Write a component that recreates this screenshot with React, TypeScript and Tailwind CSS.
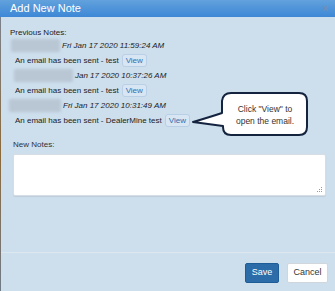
import React from "react";

interface Note {
  nameWidth: number;
  nameOffset: number;
  date: string;
  text: string;
}

const notes: Note[] = [
  { nameWidth: 49, nameOffset: 1, date: "Fri Jan 17 2020 11:59:24 AM", text: "An email has been sent - test" },
  { nameWidth: 59, nameOffset: 4, date: "Jan 17 2020 10:37:26 AM", text: "An email has been sent - test" },
  { nameWidth: 52, nameOffset: -1, date: "Fri Jan 17 2020 10:31:49 AM", text: "An email has been sent - DealerMine test" },
];

function ViewBadge() {
  return (
    <span className="ml-[3px] inline-block rounded-[3px] border border-[#b9cfe6] bg-[#d8e6f4] px-[3px] leading-[11px] text-[#2f6fb0]">
      View
    </span>
  );
}

function Callout() {
  return (
    <div className="absolute left-[190px] top-[90px] h-[48px] w-[120px]">
      <svg width="120" height="48" viewBox="0 0 120 48" className="absolute left-0 top-0">
        <path
          d="M41 3 H109 Q117 3 117 11 V37 Q117 45 109 45 H41 Q33 45 33 37 V36 L3 32 Q20 27 32 23 V11 Q33 3 41 3 Z"
          fill="#ffffff"
          stroke="#14243f"
          strokeWidth="2"
          strokeLinejoin="round"
        />
      </svg>
      <div className="absolute left-[33px] top-[13px] w-[84px] text-center text-[8.5px] leading-[12px] text-[#333]">
        Click "View" to
        <br />
        open the email.
      </div>
    </div>
  );
}

export default function App() {
  return (
    <div className="relative flex h-[291px] w-[335px] flex-col overflow-hidden bg-[#cddeed] font-['Liberation_Sans',Arial,sans-serif]">
      {/* header */}
      <div className="flex h-[17px] items-center justify-between bg-gradient-to-b from-[#62a1dc] to-[#3c88d6] pl-[10px] pr-[7px]">
        <span className="text-[11px] text-white">Add New Note</span>
        <span className="text-[10px] font-bold leading-none text-[#6f8fb5]">×</span>
      </div>

      {/* body */}
      <div className="flex flex-1 flex-col px-[10px] pt-[10px] text-[8px] text-[#222]">
        <div className="leading-[11px]">Previous Notes:</div>
        {notes.map((n, i) => (
          <div key={i} className="flex flex-col">
            <div className="flex h-[15px] items-center" style={{ marginLeft: n.nameOffset }}>
              <div
                className="h-[13px] rounded-[2px] bg-[#b9c6d3] blur-[1.5px]"
                style={{ width: n.nameWidth }}
              />
              <span className="ml-[2px] italic">{n.date}</span>
            </div>
            <div className="flex h-[15px] items-center pl-[5px]">
              <span>{n.text}</span>
              <ViewBadge />
            </div>
          </div>
        ))}

        <div className="mt-[11px] pl-[3px] leading-[11px] text-[#333]">New Notes:</div>
        <div className="relative ml-[3px] mt-[4px] h-[42px] w-[313px] rounded-[2px] border border-[#d8dde3] bg-white shadow-[0_1px_1px_rgba(0,0,0,0.08)]">
          <svg width="6" height="6" viewBox="0 0 6 6" className="absolute bottom-[2px] right-[2px]">
            <rect x="4" y="0" width="1" height="1" fill="#999" />
            <rect x="2" y="2" width="1" height="1" fill="#999" />
            <rect x="4" y="2" width="1" height="1" fill="#999" />
            <rect x="0" y="4" width="1" height="1" fill="#999" />
            <rect x="2" y="4" width="1" height="1" fill="#999" />
            <rect x="4" y="4" width="1" height="1" fill="#999" />
          </svg>
        </div>
      </div>

      {/* footer */}
      <div className="flex h-[39px] items-start justify-end gap-[8px] border-t border-[#dde7f0] pr-[7px] pt-[10px]">
        <button className="h-[20px] w-[34px] rounded-[2px] border border-[#1f5d96] bg-[#2c6ca8] text-[9px] text-white">
          Save
        </button>
        <button className="h-[20px] w-[41px] rounded-[2px] border border-[#d0d6dc] bg-white text-[9px] text-[#333]">
          Cancel
        </button>
      </div>

      <Callout />

      {/* left strip */}
      <div className="absolute left-0 top-[17px] h-[274px] w-[1px] bg-gradient-to-b from-[#7a828c] via-[#8a6a3a] to-[#6f7a88]" />
    </div>
  );
}
